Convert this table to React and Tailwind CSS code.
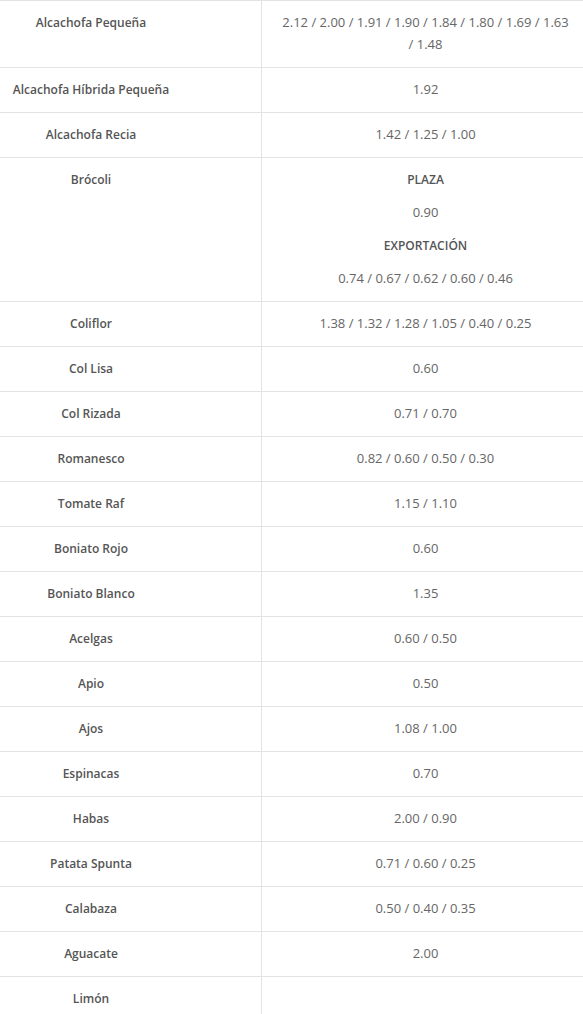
import React from "react";

const rows = [
  ["Alcachofa Pequeña", "2.12 / 2.00 / 1.91 / 1.90 / 1.84 / 1.80 / 1.69 / 1.63 / 1.48"],
  ["Alcachofa Híbrida Pequeña", "1.92"],
  ["Alcachofa Recia", "1.42 / 1.25 / 1.00"],
  ["Brócoli", null],
  ["Coliflor", "1.38 / 1.32 / 1.28 / 1.05 / 0.40 / 0.25"],
  ["Col Lisa", "0.60"],
  ["Col Rizada", "0.71 / 0.70"],
  ["Romanesco", "0.82 / 0.60 / 0.50 / 0.30"],
  ["Tomate Raf", "1.15 / 1.10"],
  ["Boniato Rojo", "0.60"],
  ["Boniato Blanco", "1.35"],
  ["Acelgas", "0.60 / 0.50"],
  ["Apio", "0.50"],
  ["Ajos", "1.08 / 1.00"],
  ["Espinacas", "0.70"],
  ["Habas", "2.00 / 0.90"],
  ["Patata Spunta", "0.71 / 0.60 / 0.25"],
  ["Calabaza", "0.50 / 0.40 / 0.35"],
  ["Aguacate", "2.00"],
  ["Limón", ""],
];

export default function App() {
  return (
    <div
      className="w-[583px] bg-white text-[13px] leading-[22px]"
      style={{ fontFamily: '"Open Sans", "Liberation Sans", sans-serif' }}
    >
      {rows.map(([name, val], i) => (
        <div key={i} className="grid grid-cols-[261px_1fr] border-t border-[#e3e3e3]">
          <div className="pt-[11px] pb-[11px]">
            <div className="w-[182px] text-center text-[12px] font-semibold text-[#555] whitespace-nowrap">{name}</div>
          </div>
          <div className="border-l border-[#e3e3e3] pt-[10px] pb-[12px] pl-[18px] pr-[12px] text-center text-[#666]">
            {val === null ? (
              <div className="flex flex-col gap-[11px]">
                <div className="translate-y-px text-[12px] font-semibold text-[#555]">PLAZA</div>
                <div>0.90</div>
                <div className="translate-y-px text-[12px] font-semibold text-[#555]">EXPORTACIÓN</div>
                <div>0.74 / 0.67 / 0.62 / 0.60 / 0.46</div>
              </div>
            ) : (
              <div className="min-h-[22px]">{val}</div>
            )}
          </div>
        </div>
      ))}
    </div>
  );
}
